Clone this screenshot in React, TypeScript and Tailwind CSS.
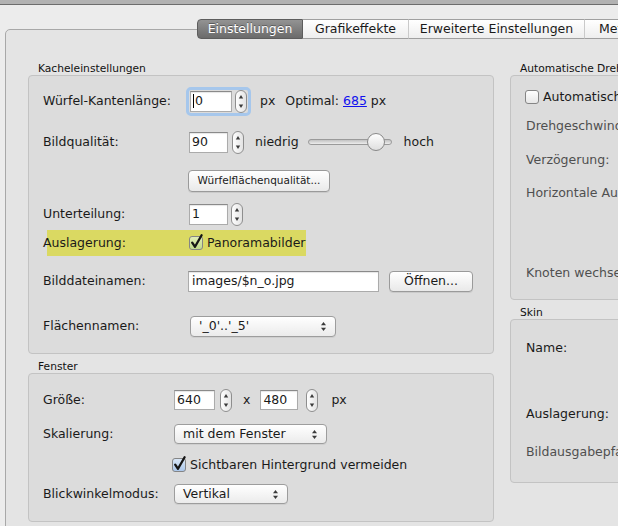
import React from "react";

const Stepper = () => (
  <svg width="12" height="23" viewBox="0 0 12 23" className="block shrink-0">
    <defs>
      <linearGradient id="stg" x1="0" y1="0" x2="1" y2="0">
        <stop offset="0" stopColor="#ffffff" />
        <stop offset="1" stopColor="#e2e2e2" />
      </linearGradient>
    </defs>
    <rect x="0.5" y="0.5" width="11" height="22" rx="5.5" fill="url(#stg)" stroke="#8e8e8e" />
    <path d="M6 5 L8.2 8.6 L3.8 8.6 Z" fill="#3a3a3a" />
    <path d="M6 18 L8.2 14.4 L3.8 14.4 Z" fill="#3a3a3a" />
  </svg>
);

const PopArrows = () => (
  <svg width="7" height="11" viewBox="0 0 7 11" className="block shrink-0">
    <path d="M3.5 1 L6 4.3 L1 4.3 Z" fill="#3a3a3a" />
    <path d="M3.5 10 L6 6.7 L1 6.7 Z" fill="#3a3a3a" />
  </svg>
);

const CheckBox = ({ checked, variant }: { checked?: boolean; variant: "w" | "b" | "g" }) => {
  const id = "cb" + variant;
  const stops =
    variant === "w"
      ? ["#ffffff", "#e6e6e6"]
      : variant === "b"
      ? ["#dbe8f7", "#a9c6ea"]
      : ["#e3efb8", "#bfd98a"];
  return (
    <svg width="16" height="16" viewBox="0 0 16 16" className="block shrink-0 overflow-visible">
      <defs>
        <linearGradient id={id} x1="0" y1="0" x2="0" y2="1">
          <stop offset="0" stopColor={stops[0]} />
          <stop offset="1" stopColor={stops[1]} />
        </linearGradient>
      </defs>
      <rect x="0.5" y="1.5" width="13" height="13" rx="2.5" fill={`url(#${id})`} stroke="#858585" />
      {checked && (
        <path
          d="M3.2 7.6 L6 11.8 L12.6 0.2"
          fill="none"
          stroke="#151515"
          strokeWidth="2.3"
          strokeLinecap="round"
          strokeLinejoin="round"
        />
      )}
    </svg>
  );
};

const Slider = () => (
  <svg width="84" height="20" viewBox="0 0 84 20" className="block shrink-0">
    <defs>
      <linearGradient id="trk" x1="0" y1="0" x2="0" y2="1">
        <stop offset="0" stopColor="#bdbdbd" />
        <stop offset="1" stopColor="#f2f2f2" />
      </linearGradient>
      <linearGradient id="knb" x1="0" y1="0" x2="0" y2="1">
        <stop offset="0" stopColor="#ffffff" />
        <stop offset="1" stopColor="#dedede" />
      </linearGradient>
    </defs>
    <rect x="0.5" y="7.5" width="83" height="5" rx="2.5" fill="url(#trk)" stroke="#9a9a9a" />
    <circle cx="68" cy="10" r="8.5" fill="url(#knb)" stroke="#888888" />
  </svg>
);

const Field = ({ className, children }: { className: string; children?: React.ReactNode }) => (
  <div
    className={
      "shrink-0 flex items-center pl-[2px] bg-white border border-[#ababab] border-t-[#8a8a8a] shadow-[inset_0_1px_1px_rgba(0,0,0,0.10)] whitespace-nowrap " +
      className
    }
  >
    {children}
  </div>
);

const Popup = ({ className, label }: { className: string; label: string }) => (
  <div
    className={
      "shrink-0 flex items-center justify-between pl-[8px] pr-[8px] rounded-[4px] border border-[#9d9d9d] bg-linear-to-b from-white to-[#ebebeb] shadow-[0_1px_0_rgba(0,0,0,0.06)] whitespace-nowrap " +
      className
    }
  >
    <span>{label}</span>
    <PopArrows />
  </div>
);

const Button = ({ className, children }: { className: string; children: React.ReactNode }) => (
  <div
    className={
      "shrink-0 flex items-center justify-center rounded-[4px] border border-[#9a9a9a] bg-linear-to-b from-white to-[#e9e9e9] shadow-[0_1px_0_rgba(0,0,0,0.08)] whitespace-nowrap " +
      className
    }
  >
    {children}
  </div>
);

const GroupLabel = ({ children }: { children: React.ReactNode }) => (
  <div className="h-[12px] leading-[12px] pl-[10px] text-[10.7px] whitespace-nowrap text-[#111]">{children}</div>
);

export default function App() {
  return (
    <div className="w-[618px] h-[526px] overflow-hidden bg-[#ececec] font-['DejaVu_Sans',sans-serif] text-[12.5px] text-[#1a1a1a]">
      <div className="h-[5px] bg-[#b2b2b2] border-b border-[#6d6d6d]" />

      {/* Tabs */}
      <div className="relative z-10 mt-[14px] ml-[197px] flex h-[20px] w-[500px] whitespace-nowrap">
        <div className="w-[106px] h-full flex items-center justify-center rounded-l-[4px] border border-[#5d5d5d] bg-linear-to-b from-[#939393] to-[#6b6b6b] text-white [text-shadow:0_-1px_0_rgba(0,0,0,0.35)]">
          Einstellungen
        </div>
        <div className="w-[106px] h-full flex items-center justify-center border-y border-r border-y-[#a0a0a0] border-r-[#cacaca] bg-linear-to-b from-white to-[#eeeeee]">
          Grafikeffekte
        </div>
        <div className="w-[176px] h-full flex items-center justify-center border-y border-r border-y-[#a0a0a0] border-r-[#cacaca] bg-linear-to-b from-white to-[#eeeeee]">
          Erweiterte Einstellungen
        </div>
        <div className="w-[110px] h-full flex items-center pl-[14px] border-y border-[#a0a0a0] bg-linear-to-b from-white to-[#eeeeee]">
          Meta-Daten
        </div>
      </div>

      {/* Tab body */}
      <div className="-mt-[10px] ml-[5px] w-[700px] h-[600px] rounded-tl-[5px] border border-[#a8a8a8] bg-[#e4e4e4] pt-[33px] pl-[22px] flex gap-[16px]">
        {/* Left column */}
        <div className="w-[466px] shrink-0 flex flex-col">
          <GroupLabel>Kacheleinstellungen</GroupLabel>
          <div className="h-[279px] rounded-[4px] border border-[#c3c3c3] bg-[#dcdcdc] pt-[13px] flex flex-col">
            {/* row 1 */}
            <div className="h-[24px] flex items-center pl-[14px] whitespace-nowrap">
              <div className="w-[143px]">Würfel-Kantenlänge:</div>
              <div className="flex items-center gap-[3px] rounded-[5px] border-[3px] border-[#a6c7ec] px-[1px]">
                <Field className="w-[42px] h-[21px] my-[1px]">
                  <span className="inline-block w-px h-[14px] bg-black mr-px" />0
                </Field>
                <Stepper />
              </div>
              <span className="ml-[9px]">px</span>
              <span className="ml-[10px]">Optimal:&nbsp;</span>
              <span className="text-[#1111ee] underline">685</span>
              <span>&nbsp;px</span>
            </div>
            {/* row 2 */}
            <div className="mt-[17px] h-[24px] flex items-center pl-[14px] whitespace-nowrap">
              <div className="w-[146px]">Bildqualität:</div>
              <Field className="w-[39px] h-[21px]">90</Field>
              <div className="ml-[4px]">
                <Stepper />
              </div>
              <span className="ml-[11px]">niedrig</span>
              <div className="ml-[9px]">
                <Slider />
              </div>
              <span className="ml-[12px]">hoch</span>
            </div>
            {/* row 3 */}
            <div className="mt-[16px] h-[22px] flex items-center pl-[14px]">
              <div className="w-[145px]" />
              <Button className="w-[142px] h-[22px] text-[10.5px]">Würfelflächenqualität...</Button>
            </div>
            {/* row 4 */}
            <div className="mt-[10px] h-[24px] flex items-center pl-[14px] whitespace-nowrap">
              <div className="w-[146px]">Unterteilung:</div>
              <Field className="w-[39px] h-[21px]">1</Field>
              <div className="ml-[3px]">
                <Stepper />
              </div>
            </div>
            {/* row 5 highlight */}
            <div className="mt-[4px] ml-[18px] w-[259px] h-[26px] flex items-center bg-[#dad962] whitespace-nowrap">
              <div className="-ml-[4px] w-[146px]">Auslagerung:</div>
              <CheckBox checked variant="g" />
              <span className="ml-[2px]">Panoramabilder</span>
            </div>
            {/* row 6 */}
            <div className="mt-[13px] h-[24px] flex items-center pl-[14px] whitespace-nowrap">
              <div className="w-[145px]">Bilddateinamen:</div>
              <Field className="w-[191px] h-[21px] pl-[3px]">images/$n_o.jpg</Field>
              <Button className="ml-[10px] w-[84px] h-[21px]">Öffnen...</Button>
            </div>
            {/* row 7 */}
            <div className="mt-[21px] h-[24px] flex items-center pl-[14px] whitespace-nowrap">
              <div className="w-[147px]">Flächennamen:</div>
              <Popup className="w-[146px] h-[21px]" label="'_0'..'_5'" />
            </div>
          </div>

          <div className="mt-[7px]">
            <GroupLabel>Fenster</GroupLabel>
          </div>
          <div className="h-[149px] rounded-[4px] border border-[#c3c3c3] bg-[#dcdcdc] pt-[14px] flex flex-col">
            <div className="h-[24px] flex items-center pl-[14px] whitespace-nowrap">
              <div className="w-[131px]">Größe:</div>
              <Field className="w-[41px] h-[20px]">640</Field>
              <div className="ml-[5px]">
                <Stepper />
              </div>
              <span className="ml-[11px]">x</span>
              <Field className="ml-[10px] w-[38px] h-[20px]">480</Field>
              <div className="ml-[8px]">
                <Stepper />
              </div>
              <span className="ml-[13px]">px</span>
            </div>
            <div className="mt-[10px] h-[24px] flex items-center pl-[14px] whitespace-nowrap">
              <div className="w-[131px]">Skalierung:</div>
              <Popup className="w-[153px] h-[20px]" label="mit dem Fenster" />
            </div>
            <div className="mt-[7px] h-[24px] flex items-center pl-[14px] whitespace-nowrap">
              <div className="w-[129px]" />
              <CheckBox checked variant="b" />
              <span className="ml-[2px]">Sichtbaren Hintergrund vermeiden</span>
            </div>
            <div className="mt-[5px] h-[24px] flex items-center pl-[14px] whitespace-nowrap">
              <div className="w-[131px]">Blickwinkelmodus:</div>
              <Popup className="w-[114px] h-[20px]" label="Vertikal" />
            </div>
          </div>
        </div>

        {/* Right column */}
        <div className="w-[220px] shrink-0 flex flex-col whitespace-nowrap">
          <GroupLabel>Automatische Drehung</GroupLabel>
          <div className="h-[225px] rounded-[4px] border border-[#c3c3c3] bg-[#dcdcdc] pt-[12px] pl-[15px] flex flex-col">
            <div className="h-[18px] flex items-center -ml-[1px]">
              <CheckBox variant="w" />
              <span className="ml-[2px]">Automatische Drehung aktivieren</span>
            </div>
            <div className="mt-[11px] h-[18px] leading-[18px] text-[#4f4f4f]">Drehgeschwindigkeit:</div>
            <div className="mt-[16px] h-[18px] leading-[18px] text-[#4f4f4f]">Verzögerung:</div>
            <div className="mt-[15px] h-[18px] leading-[18px] text-[#4f4f4f]">Horizontale Ausrichtung:</div>
            <div className="mt-[62px] h-[18px] leading-[18px] text-[#4f4f4f]">Knoten wechseln:</div>
          </div>
          <div className="mt-[7px]">
            <GroupLabel>Skin</GroupLabel>
          </div>
          <div className="h-[164px] rounded-[4px] border border-[#c3c3c3] bg-[#dcdcdc] pt-[19px] pl-[15px] flex flex-col">
            <div className="h-[18px] leading-[18px]">Name:</div>
            <div className="mt-[48px] h-[18px] leading-[18px]">Auslagerung:</div>
            <div className="mt-[20px] h-[18px] leading-[18px] text-[#4f4f4f]">Bildausgabepfad:</div>
          </div>
        </div>
      </div>
    </div>
  );
}
